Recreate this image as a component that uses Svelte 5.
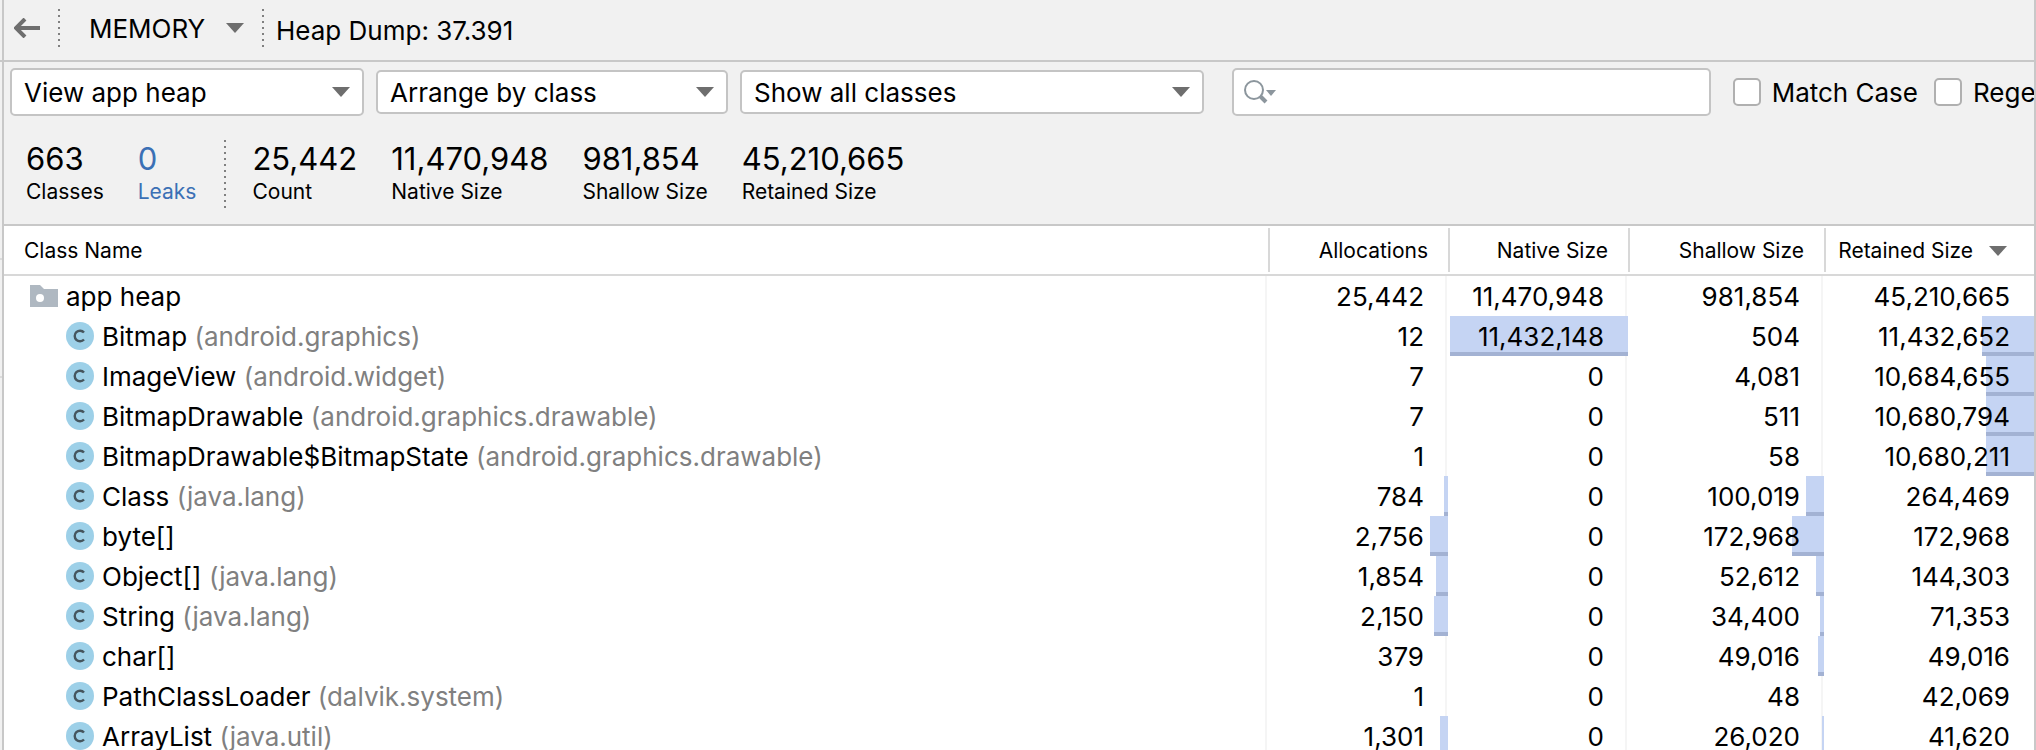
<script lang="ts">
	let arrow = 'M0 0h18l-9 10z';

	let heap = 'View app heap';
	let arrangement = 'Arrange by class';
	let filter = 'Show all classes';
	let search = '';
	let matchCase = false;
	let regex = false;

	const stats = [
		{ value: 25442, label: 'Count' },
		{ value: 11470948, label: 'Native Size' },
		{ value: 981854, label: 'Shallow Size' },
		{ value: 45210665, label: 'Retained Size' }
	];

	const total = [25442, 11470948, 981854, 45210665];

	const classes = [
		{ name: 'Bitmap', pkg: 'android.graphics', values: [12, 11432148, 504, 11432652] },
		{ name: 'ImageView', pkg: 'android.widget', values: [7, 0, 4081, 10684655] },
		{ name: 'BitmapDrawable', pkg: 'android.graphics.drawable', values: [7, 0, 511, 10680794] },
		{ name: 'BitmapDrawable$BitmapState', pkg: 'android.graphics.drawable', values: [1, 0, 58, 10680211] },
		{ name: 'Class', pkg: 'java.lang', values: [784, 0, 100019, 264469] },
		{ name: 'byte[]', pkg: '', values: [2756, 0, 172968, 172968] },
		{ name: 'Object[]', pkg: 'java.lang', values: [1854, 0, 52612, 144303] },
		{ name: 'String', pkg: 'java.lang', values: [2150, 0, 34400, 71353] },
		{ name: 'char[]', pkg: '', values: [379, 0, 49016, 49016] },
		{ name: 'PathClassLoader', pkg: 'dalvik.system', values: [1, 0, 48, 42069] },
		{ name: 'ArrayList', pkg: 'java.util', values: [1301, 0, 26020, 41620] }
	];

	function format(n: number) {
		return n.toLocaleString('en-US');
	}

	// whole percent of the heap total
	function share(n: number, column: number) {
		return Math.floor((n / total[column]) * 100);
	}
</script>

<div class="profiler">
	<div class="gutter"></div>
	<header class="toolbar">
		<button class="back" aria-label="Back">
			<svg width="26" height="20" viewBox="0 0 26 20"><path d="M26 10H3M11 1L2 10l9 9" /></svg>
		</button>
		<div class="dots"></div>
		<div class="select stage">
			<select aria-label="Profiler stage"><option>MEMORY</option></select>
			<svg class="arrow" width="18" height="10"><path d={arrow} /></svg>
		</div>
		<div class="dots"></div>
		<span class="title">Heap Dump: 37.391</span>
	</header>

	<main class="panel">
		<div class="filters">
			<div class="select heap">
				<select aria-label="Heap" bind:value={heap}><option>View app heap</option></select>
				<svg class="arrow" width="18" height="10"><path d={arrow} /></svg>
			</div>
			<div class="select arrange">
				<select aria-label="Arrangement" bind:value={arrangement}><option>Arrange by class</option></select>
				<svg class="arrow" width="18" height="10"><path d={arrow} /></svg>
			</div>
			<div class="select show">
				<select aria-label="Class filter" bind:value={filter}><option>Show all classes</option></select>
				<svg class="arrow" width="18" height="10"><path d={arrow} /></svg>
			</div>
			<div class="search">
				<svg width="34" height="26" viewBox="0 0 34 26">
					<circle cx="10" cy="11" r="9" />
					<path class="handle" d="M16 17l6 6" />
					<path class="caret" d="M22 11h10l-5 6z" />
				</svg>
				<input type="text" aria-label="Search classes" bind:value={search} />
			</div>
			<label class="check"><input type="checkbox" bind:checked={matchCase} /><span>Match Case</span></label>
			<label class="check regex"><input type="checkbox" bind:checked={regex} /><span>Regex</span></label>
		</div>

		<div class="stats">
			<div class="stat"><strong>663</strong><span>Classes</span></div>
			<a class="stat leaks" href="#leaks"><strong>0</strong><span>Leaks</span></a>
			<div class="dots"></div>
			{#each stats as stat}
				<div class="stat"><strong>{format(stat.value)}</strong><span>{stat.label}</span></div>
			{/each}
		</div>

		<table>
			<colgroup>
				<col />
				<col class="col-size" />
				<col class="col-size" />
				<col class="col-shallow" />
				<col class="col-retained" />
			</colgroup>
			<thead>
				<tr>
					<th>Class Name</th>
					<th>Allocations</th>
					<th>Native Size</th>
					<th>Shallow Size</th>
					<th class="sorted">
						<div>Retained Size<svg width="18" height="10"><path d={arrow} /></svg></div>
					</th>
				</tr>
			</thead>
			<tbody>
				<tr>
					<td>
						<div class="name root">
							<svg width="28" height="22" viewBox="0 0 28 22">
								<path class="folder" d="M0 0h10l4 4h14v18H0z" />
								<circle cx="10" cy="13" r="4" fill="#fff" />
							</svg>
							<span>app heap</span>
						</div>
					</td>
					{#each total as value}
						<td>{format(value)}</td>
					{/each}
				</tr>
				{#each classes as row}
					<tr>
						<td>
							<div class="name">
								<svg width="28" height="28" viewBox="0 0 28 28">
									<circle cx="14" cy="14" r="14" fill="#9dd0e8" />
									<path class="letter" d="M18 10.500A5.300 5.300 0 1 0 18 17.500" />
								</svg>
								<span>{row.name}{#if row.pkg}{' '}<span class="pkg">({row.pkg})</span>{/if}</span>
							</div>
						</td>
						{#each row.values as value, i}
							<td>
								{#if share(value, i) > 0}
									<span class="bar" style="--share: {share(value, i)}%"></span>
								{/if}
								<span class="value">{format(value)}</span>
							</td>
						{/each}
					</tr>
				{/each}
			</tbody>
		</table>
	</main>
</div>

<style>
	:global(body) {
		margin: 0;
		overflow: hidden;
	}

	.profiler {
		height: 100vh;
		display: grid;
		grid-template: 60px 1fr / 2px 1fr;
		overflow: hidden;
		background-color: #f1f1f1;
		color: #000;
		font-family: Inter, 'Liberation Sans', sans-serif;
		font-size: 26px;
		line-height: 30px;
	}

	.gutter {
		grid-row: 1 / 3;
		background:
			linear-gradient(#c8c8c8, #c8c8c8) 0 60px / 2px 2px no-repeat,
			linear-gradient(#dcdcdc, #dcdcdc) 0 258px / 2px 2px no-repeat,
			linear-gradient(#dcdcdc, #dcdcdc) 0 376px / 2px 2px no-repeat;
	}

	.toolbar,
	.panel {
		border: solid #c8c8c8;
		border-width: 0 2px;
		min-width: 0;
	}

	.toolbar {
		display: flex;
		align-items: center;
		box-sizing: border-box;
		padding: 0 10px 4px;
	}

	.panel {
		border-top-width: 2px;
		overflow: hidden;
	}

	svg {
		display: block;
		flex: none;
		fill: #6e6e6e;
	}

	.back {
		border: 0;
		padding: 0;
		background: none;
		cursor: pointer;
	}

	.back path {
		fill: none;
		stroke: #6e6e6e;
		stroke-width: 4;
	}

	.dots {
		width: 2px;
		height: 38px;
		margin: 0 12px 0 18px;
		background: repeating-linear-gradient(#808080 0 2px, transparent 2px 6px);
	}

	select,
	input {
		font: inherit;
		color: inherit;
	}

	.select {
		display: grid;
		align-items: center;
		flex: none;
	}

	.select select {
		grid-area: 1 / 1;
		appearance: none;
		box-sizing: border-box;
		width: 100%;
		height: 44px;
		padding: 2px 44px 0 12px;
		border: 2px solid #c4c4c4;
		border-radius: 5px;
		background-color: #fff;
	}

	.select .arrow {
		grid-area: 1 / 1;
		justify-self: end;
		margin-right: 14px;
		pointer-events: none;
	}

	.select.stage {
		margin-left: 15px;
	}

	.stage select {
		padding-left: 0;
		padding-right: 36px;
		border-color: transparent;
		background: none;
	}

	.stage .arrow {
		margin-right: 0;
	}

	.title {
		padding-top: 6px;
	}

	.filters {
		display: flex;
		align-items: center;
		gap: 12px;
		padding: 6px 0 0 6px;
	}

	.heap {
		width: 354px;
	}

	.heap select {
		height: 48px;
	}

	.arrange {
		width: 352px;
	}

	.show {
		width: 464px;
	}

	.search {
		flex: 1;
		min-width: 0;
		height: 44px;
		margin: 0 10px 0 16px;
		padding-left: 10px;
		display: flex;
		align-items: center;
		border: 2px solid #c4c4c4;
		border-radius: 5px;
		background-color: #fff;
	}

	.search circle,
	.search .handle {
		fill: none;
		stroke: #8c969d;
		stroke-width: 2;
	}

	.search .handle {
		stroke-width: 4;
	}

	.search .caret {
		fill: #8c969d;
	}

	.search input {
		flex: 1;
		min-width: 0;
		border: 0;
		outline: none;
		background: none;
	}

	.check {
		display: flex;
		align-items: center;
		gap: 11px;
		flex: none;
	}

	.check span {
		padding-top: 2px;
	}

	.check input {
		appearance: none;
		box-sizing: border-box;
		flex: none;
		width: 28px;
		height: 28px;
		margin: 0;
		border: 2px solid #b0b0b0;
		border-radius: 5px;
		background-color: #fff;
	}

	.check input:checked {
		background-color: #4a86cf;
	}

	.regex {
		width: 100px;
		margin-left: 4px;
		overflow: hidden;
	}

	.stats {
		display: flex;
		gap: 34px;
		padding: 24px 22px 16px;
	}

	.stats .dots {
		height: 68px;
		margin: 0 -8px 0 -6px;
	}

	.stat {
		display: flex;
		flex-direction: column;
		color: inherit;
		text-decoration: none;
	}

	.stat strong {
		font-size: 31px;
		font-weight: 400;
		line-height: 38px;
	}

	.stat span {
		font-size: 21px;
		line-height: 28px;
	}

	.leaks {
		color: #3b70b5;
	}

	table {
		width: 100%;
		table-layout: fixed;
		border-top: 2px solid #c8c8c8;
		border-spacing: 0;
		background-color: #fff;
	}

	.col-size {
		width: 180px;
	}

	.col-shallow {
		width: 196px;
	}

	.col-retained {
		width: 210px;
	}

	th {
		box-sizing: border-box;
		height: 50px;
		padding: 2px 20px 0;
		border-bottom: 2px solid #d8d8d8;
		font-size: 21px;
		font-weight: 400;
		text-align: right;
		background: linear-gradient(#d8d8d8, #d8d8d8) left center / 2px 44px no-repeat;
	}

	th:first-child {
		text-align: left;
		background: none;
	}

	th.sorted {
		padding: 2px 27px 0 0;
	}

	.sorted div {
		display: flex;
		align-items: center;
		justify-content: flex-end;
		gap: 16px;
	}

	td {
		position: relative;
		box-sizing: border-box;
		height: 40px;
		padding: 2px 24px 0 0;
		text-align: right;
		white-space: nowrap;
		background: linear-gradient(#f5f5f5, #f5f5f5) right 1px top / 2px 100% no-repeat;
	}

	td:last-child {
		background: none;
	}

	.name {
		display: flex;
		align-items: center;
		gap: 8px;
		padding-left: 62px;
	}

	.name svg {
		margin-bottom: 2px;
	}

	.name.root {
		padding-left: 26px;
	}

	.folder {
		fill: #afb8c1;
	}

	.letter {
		fill: none;
		stroke: #45555e;
		stroke-width: 2.4;
	}

	.pkg {
		color: #808080;
	}

	/* share of the column total, drawn behind the number */
	.bar {
		position: absolute;
		top: 0;
		right: 0;
		bottom: 0;
		width: round(down, var(--share), 2px);
		box-sizing: border-box;
		border-bottom: 4px solid #a3b2d3;
		background-color: #c5d4f3;
	}

	.value {
		position: relative;
	}
</style>
